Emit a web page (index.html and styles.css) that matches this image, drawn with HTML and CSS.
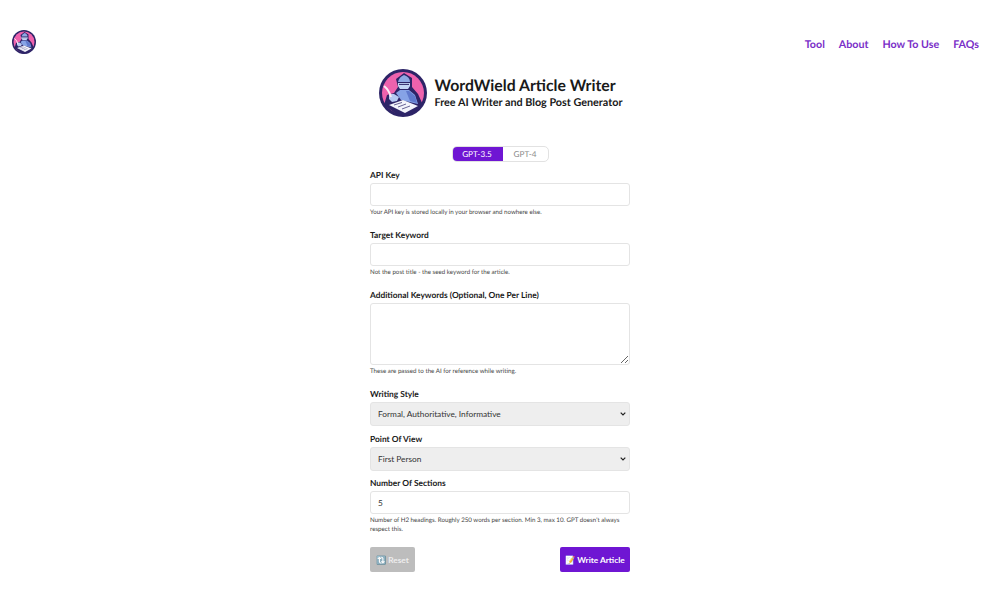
FILE: index.html
```html
<!DOCTYPE html>
<html>
<head>
    <meta charset="utf-8" />
    <title>WordWield Article Writer</title>
    <link rel="stylesheet" href="styles.css">
</head>
<body>
    <svg class="defs" width="0" height="0">
        <symbol id="logo" viewBox="0 0 48 48">
            <circle cx="24" cy="24" r="24" fill="#2d2467" />
            <circle cx="24" cy="24" r="21" fill="#ee62ad" />
            <path d="M20 47 L5 36 L8 26 L15 24 L19 18 L17 10 L25 4 L33 9 L33 18 L39 25 L44 36 L30 47 Z" fill="#2d2467" />
            <path d="M19 13 Q20 8 25 6 Q31 8 31 13 Z" fill="#8fa8e4" />
            <path d="M19 14 H31 V17 L29 20 H21 L19 17 Z" fill="#c4d4f5" />
            <path d="M20 15.4 H30" stroke="#2d2467" stroke-width="1" />
            <path d="M17 24 L21 21 H30 L36 26 L39 35 L22 31 Z" fill="#86a3e6" />
            <path d="M27 22 L30 22 L36 27 L38 34 L31 32 Z" fill="#5f79cc" />
            <path d="M10 25 L15 25 L20 28 L18 32 L13 33 L10 30 Z" fill="#b6c9f2" />
            <path d="M5 17 Q10 21 12 28" stroke="#fbeaf4" stroke-width="2" fill="none" />
            <path d="M10 36 L24 31 L39 37 L26 44 Z" fill="#f3f4fb" />
            <path d="M15 36 L23 33.5 M19 38 L27 35 M23 40 L31 37" stroke="#2d2467" stroke-width="0.7" />
        </symbol>
    </svg>

    <nav class="nav">
        <svg class="nav-logo"><use href="#logo" /></svg>
        <div class="nav-links">
            <a href="#">Tool</a>
            <a href="#">About</a>
            <a href="#">How To Use</a>
            <a href="#">FAQs</a>
        </div>
    </nav>

    <header class="brand">
        <svg class="brand-logo"><use href="#logo" /></svg>
        <div class="brand-text">
            <h1>WordWield Article Writer</h1>
            <h2>Free AI Writer and Blog Post Generator</h2>
        </div>
    </header>

    <div class="toggle">
        <span class="toggle-item active">GPT-3.5</span>
        <span class="toggle-item">GPT-4</span>
    </div>

    <form class="form">
        <label>API Key</label>
        <input type="text" class="field">
        <p class="help">Your API key is stored locally in your browser and nowhere else.</p>

        <label class="gap">Target Keyword</label>
        <input type="text" class="field">
        <p class="help">Not the post title - the seed keyword for the article.</p>

        <label class="gap">Additional Keywords (Optional, One Per Line)</label>
        <textarea class="field area"></textarea>
        <p class="help">These are passed to the AI for reference while writing.</p>

        <label class="gap">Writing Style</label>
        <select class="field choice">
            <option>Formal, Authoritative, Informative</option>
        </select>

        <label class="gap-small">Point Of View</label>
        <select class="field choice">
            <option>First Person</option>
        </select>

        <label class="gap-small number-label">Number Of Sections</label>
        <input type="text" class="field" value="5">
        <p class="help">Number of H2 headings. Roughly 250 words per section. Min 3, max 10. GPT doesn't always respect this.</p>

        <div class="actions">
            <button type="button" class="btn btn-reset">🔃 Reset</button>
            <button type="button" class="btn btn-write">📝 Write Article</button>
        </div>
    </form>
</body>
</html>
```

FILE: styles.css
```css
* {
    box-sizing: border-box;
}

body {
    margin: 0;
    background-color: white;
    color: #1a1a1a;
    font-family: "Lato", "Liberation Sans", sans-serif;
    text-rendering: geometricPrecision;
}

.defs {
    display: block;
}

.nav {
    display: flex;
    justify-content: space-between;
    height: 24px;
    margin-top: 30px;
    padding: 0 21px 0 12px;
}

.nav-logo {
    width: 24px;
    height: 24px;
}

.nav-links {
    display: flex;
    gap: 14px;
    margin-top: 8px;
}

.nav-links a {
    color: #7a2fc8;
    font-size: 10.7px;
    line-height: 14px;
    font-weight: 700;
    text-decoration: none;
}

.brand {
    display: flex;
    justify-content: center;
    align-items: center;
    gap: 8px;
    margin-top: 15px;
    padding-left: 1px;
}

.brand-logo {
    width: 48px;
    height: 48px;
}

h1 {
    margin: 0;
    font-size: 15.8px;
    line-height: 20px;
    font-weight: 700;
}

h2 {
    margin: 0;
    font-size: 10.8px;
    line-height: 14px;
    font-weight: 700;
}

.toggle {
    display: flex;
    width: 97px;
    height: 16px;
    margin: 29px auto 0;
    border: 1px solid #e2e2e2;
    border-radius: 5px;
    overflow: hidden;
    font-size: 8.2px;
}

.toggle-item {
    flex: 1;
    display: flex;
    justify-content: center;
    align-items: center;
    color: #8a8a8a;
}

.toggle-item.active {
    flex: none;
    width: 51px;
    margin: -1px 0 -1px -1px;
    background-color: #6f16d3;
    color: white;
}

.form {
    display: flex;
    flex-direction: column;
    width: 260px;
    margin: 7px auto 0;
}

label {
    font-size: 8.4px;
    line-height: 12px;
    font-weight: 700;
    margin-bottom: 2px;
}

label.gap {
    margin-top: 11.5px;
}

label.gap-small {
    margin-top: 7px;
}

label.number-label {
    margin-top: 6px;
}

.field {
    display: block;
    width: 260px;
    height: 23px;
    padding: 0 7px;
    background-color: white;
    border: 1px solid #e4e4e4;
    border-radius: 3px;
    font-family: "Lato", "Liberation Sans", sans-serif;
    font-size: 8.3px;
    color: #333;
}

.area {
    height: 62px;
}

.choice {
    height: 24px;
    appearance: none;
    background-color: #eeeeee;
    background-image: url("data:image/svg+xml,%3Csvg xmlns='http://www.w3.org/2000/svg' width='6' height='4'%3E%3Cpath d='M.7.7 3 3l2.3-2.3' fill='none' stroke='%23222' stroke-width='1.2'/%3E%3C/svg%3E");
    background-repeat: no-repeat;
    background-position: right 3px center;
}

.help {
    margin: 3px 0 0;
    font-size: 6.2px;
    line-height: 8.5px;
    color: #444;
}

.actions {
    display: flex;
    justify-content: space-between;
    margin-top: 13px;
}

.btn {
    height: 25px;
    padding: 0;
    border: none;
    border-radius: 2px;
    color: white;
    font-family: "Lato", "Liberation Sans", sans-serif;
    font-size: 8.3px;
    font-weight: 700;
    white-space: nowrap;
}

.btn-reset {
    width: 45px;
    background-color: #bdbdbd;
    color: #eeeeee;
}

.btn-write {
    width: 70px;
    background-color: #6f16d3;
}
```
